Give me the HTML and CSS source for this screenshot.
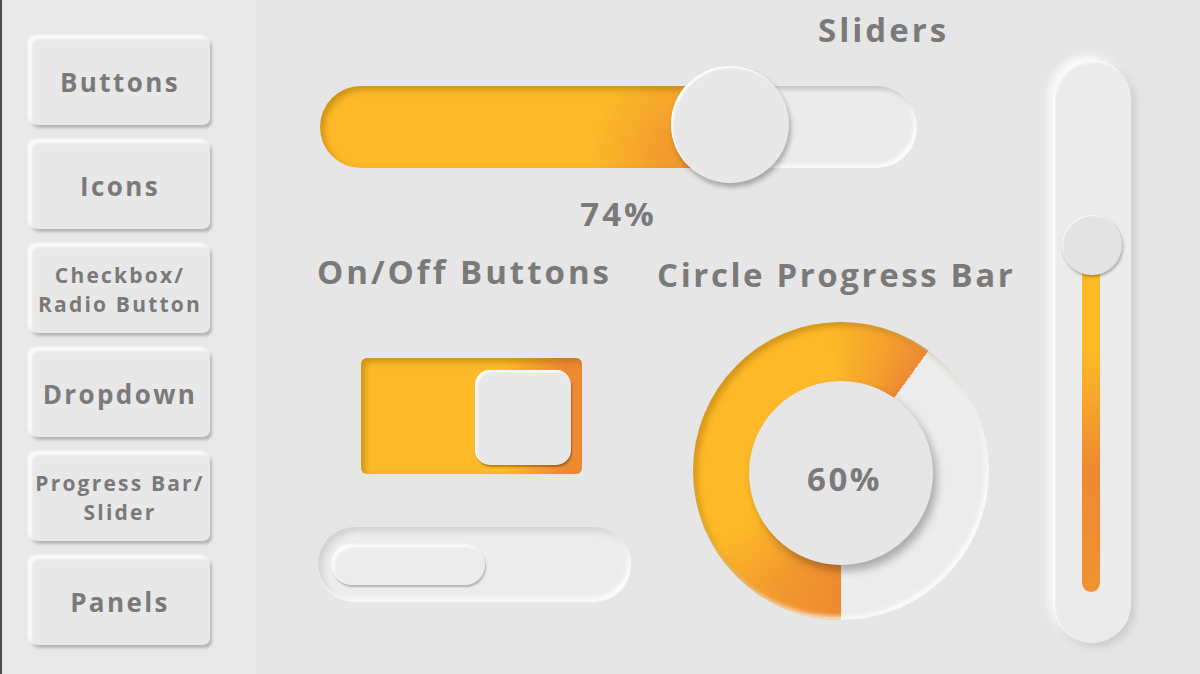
FILE: index.html
```html
<!DOCTYPE html>
<html lang="en">
<head>
    <meta charset="UTF-8">
    <meta name="viewport" content="width=device-width, initial-scale=1.0">
    <title>Neumorphic UI Kit</title>
    <link rel="stylesheet" href="styles.css">
</head>
<body>
    <nav class="sidebar">
        <button class="nav-btn">Buttons</button>
        <button class="nav-btn">Icons</button>
        <button class="nav-btn small">Checkbox/<br>Radio Button</button>
        <button class="nav-btn">Dropdown</button>
        <button class="nav-btn small">Progress Bar/<br>Slider</button>
        <button class="nav-btn">Panels</button>
    </nav>

    <main class="main">
        <div class="content">
            <h2 class="title sliders-title">Sliders</h2>

            <div class="hslider">
                <div class="hslider-fill"></div>
                <div class="hslider-thumb"></div>
            </div>
            <div class="hslider-value">74%</div>

            <div class="row">
                <section class="col-toggles">
                    <h2 class="title">On/Off Buttons</h2>
                    <div class="toggle-box">
                        <div class="toggle-knob"></div>
                    </div>
                    <div class="toggle-pill">
                        <div class="toggle-pill-knob"></div>
                    </div>
                </section>

                <section class="col-circle">
                    <h2 class="title circle-title">Circle Progress Bar</h2>
                    <div class="ring">
                        <div class="ring-center">60%</div>
                    </div>
                </section>
            </div>
        </div>

        <div class="vslider">
            <div class="vslider-thumb"></div>
            <div class="vslider-fill"></div>
        </div>
    </main>
</body>
</html>
```

FILE: styles.css
```css
* {
    box-sizing: border-box;
}
body {
    margin: 0;
    width: 1200px;
    height: 674px;
    overflow: hidden;
    display: flex;
    background-color: #e6e6e6;
    font-family: "Open Sans", "Noto Sans", sans-serif;
    font-weight: 700;
    color: #7a7a7a;
}

/* left navigation */
.sidebar {
    width: 256px;
    flex: 0 0 256px;
    background-color: #e9e9e9;
    border-left: 2px solid #4f4f4f;
    padding: 37px 0 0 28px;
    display: flex;
    flex-direction: column;
    gap: 16px;
}
.nav-btn {
    width: 180px;
    height: 88px;
    padding: 3px 0 0 0;
    border: none;
    border-radius: 7px;
    background-color: #e8e8e8;
    font-family: inherit;
    font-weight: 700;
    font-size: 26px;
    letter-spacing: 2.4px;
    line-height: 1.2;
    color: #7a7a7a;
    box-shadow: 2px 3px 3px rgba(0, 0, 0, 0.22),
                -2px -2px 3px rgba(255, 255, 255, 0.9),
                inset 2px 2px 2px rgba(255, 255, 255, 0.8);
    cursor: pointer;
}
.nav-btn.small {
    padding-top: 1px;
    font-size: 21px;
    letter-spacing: 2.2px;
    line-height: 29px;
}

/* main area */
.main {
    flex: 1;
    display: flex;
}
.content {
    flex: 0 0 797px;
    padding-top: 12px;
}
.title {
    margin: 0;
    font-size: 33px;
    line-height: 36px;
    letter-spacing: 3px;
    font-weight: 700;
    white-space: nowrap;
}
.sliders-title {
    margin-left: 562px;
}
.circle-title {
    letter-spacing: 2.6px;
}

/* horizontal slider */
.hslider {
    position: relative;
    margin: 38px 0 0 64px;
    width: 597px;
    height: 82px;
    border-radius: 41px;
    background-color: #ebebeb;
    box-shadow: inset 3px 3px 5px rgba(0, 0, 0, 0.18),
                inset -3px -3px 4px rgba(255, 255, 255, 0.95);
}
.hslider-fill {
    width: 400px;
    height: 100%;
    border-radius: 41px 0 0 41px;
    background: radial-gradient(circle at 100% 100%, #ee8a31 0, #f3a02d 70px, rgba(253, 185, 39, 0) 130px),
                #fdb927;
    box-shadow: inset 4px 4px 6px rgba(120, 80, 0, 0.35);
}
.hslider-thumb {
    position: absolute;
    left: 351px;
    top: -20px;
    width: 118px;
    height: 117px;
    border-radius: 50%;
    background-color: #e8e8e8;
    box-shadow: 2px 4px 5px rgba(0, 0, 0, 0.28),
                inset 2px 2px 2px rgba(255, 255, 255, 0.9);
}
.hslider-value {
    margin: 28px 0 0 64px;
    width: 597px;
    text-align: center;
    font-size: 33px;
    line-height: 36px;
    letter-spacing: 3px;
}

.row {
    display: flex;
    margin: 22px 0 0 61px;
}

/* on/off toggles */
.col-toggles {
    width: 315px;
}
.toggle-box {
    margin: 68px 0 0 44px;
    width: 221px;
    height: 116px;
    border-radius: 6px;
    padding: 12px 11px 0 0;
    display: flex;
    justify-content: flex-end;
    align-items: flex-start;
    background: linear-gradient(to right, #fdb927 0%, #fdb927 66%, #ee8a31 92%);
    box-shadow: inset 4px 4px 6px rgba(120, 80, 0, 0.35);
}
.toggle-knob {
    width: 96px;
    height: 95px;
    border-radius: 15px;
    background-color: #e8e8e8;
    box-shadow: 1px 2px 2px rgba(0, 0, 0, 0.3),
                inset 2px 2px 2px rgba(255, 255, 255, 0.95);
}
.toggle-pill {
    margin: 53px 0 0 1px;
    width: 313px;
    height: 74px;
    border-radius: 37px;
    padding: 18px 0 0 14px;
    background-color: #ececec;
    box-shadow: inset 4px 4px 7px rgba(0, 0, 0, 0.12),
                inset -3px -3px 5px rgba(255, 255, 255, 0.95),
                0 1px 1px rgba(255, 255, 255, 0.8);
}
.toggle-pill-knob {
    width: 153px;
    height: 40px;
    border-radius: 20px;
    background-color: #ececec;
    box-shadow: 1px 2px 2px rgba(0, 0, 0, 0.25),
                inset 2px 2px 3px rgba(255, 255, 255, 0.95),
                -1px -1px 2px rgba(255, 255, 255, 0.8);
}

/* circular progress */
.col-circle {
    margin-left: 25px;
    padding-top: 3px;
}
.ring {
    margin: 29px 0 0 36px;
    width: 296px;
    height: 298px;
    border-radius: 50%;
    display: flex;
    align-items: center;
    justify-content: center;
    background: conic-gradient(from 180deg,
        #ee8a31 0deg, #f29a2e 30deg, #fdb927 60deg,
        #fdb927 175deg, #f4a02d 200deg, #ee8a31 216deg,
        #ececec 216deg, #ececec 360deg);
    box-shadow: inset 4px 4px 6px rgba(110, 70, 0, 0.3),
                inset -3px -3px 5px rgba(255, 255, 255, 0.9);
}
.ring-center {
    width: 184px;
    height: 184px;
    margin: 4px 0 0 -1px;
    border-radius: 50%;
    background-color: #e6e6e6;
    display: flex;
    align-items: center;
    justify-content: center;
    font-size: 33px;
    letter-spacing: 2.5px;
    padding: 10px 0 0 8px;
    box-shadow: 4px 6px 8px rgba(0, 0, 0, 0.28);
}

/* vertical slider */
.vslider {
    margin-top: 60px;
    width: 78px;
    height: 583px;
    border-radius: 39px;
    background-color: #ebebeb;
    padding: 155px 0 51px 0;
    display: flex;
    flex-direction: column;
    align-items: center;
    box-shadow: 4px 4px 8px rgba(0, 0, 0, 0.12),
                -4px -4px 8px rgba(255, 255, 255, 0.9),
                inset 2px 2px 3px rgba(255, 255, 255, 0.9);
}
.vslider-thumb {
    position: relative;
    z-index: 1;
    flex: 0 0 60px;
    width: 60px;
    margin-right: 1px;
    border-radius: 50%;
    background-color: #e3e3e3;
    box-shadow: 1px 2px 3px rgba(0, 0, 0, 0.28),
                inset 1px 1px 1px rgba(255, 255, 255, 0.8);
}
.vslider-fill {
    flex: 1;
    width: 18px;
    margin: -5px 0 0 -2px;
    border-radius: 0 0 9px 9px;
    background: linear-gradient(to bottom, #fdb927 0%, #fdb927 25%, #ee8a31 62%, #ef9333 100%);
}
```
